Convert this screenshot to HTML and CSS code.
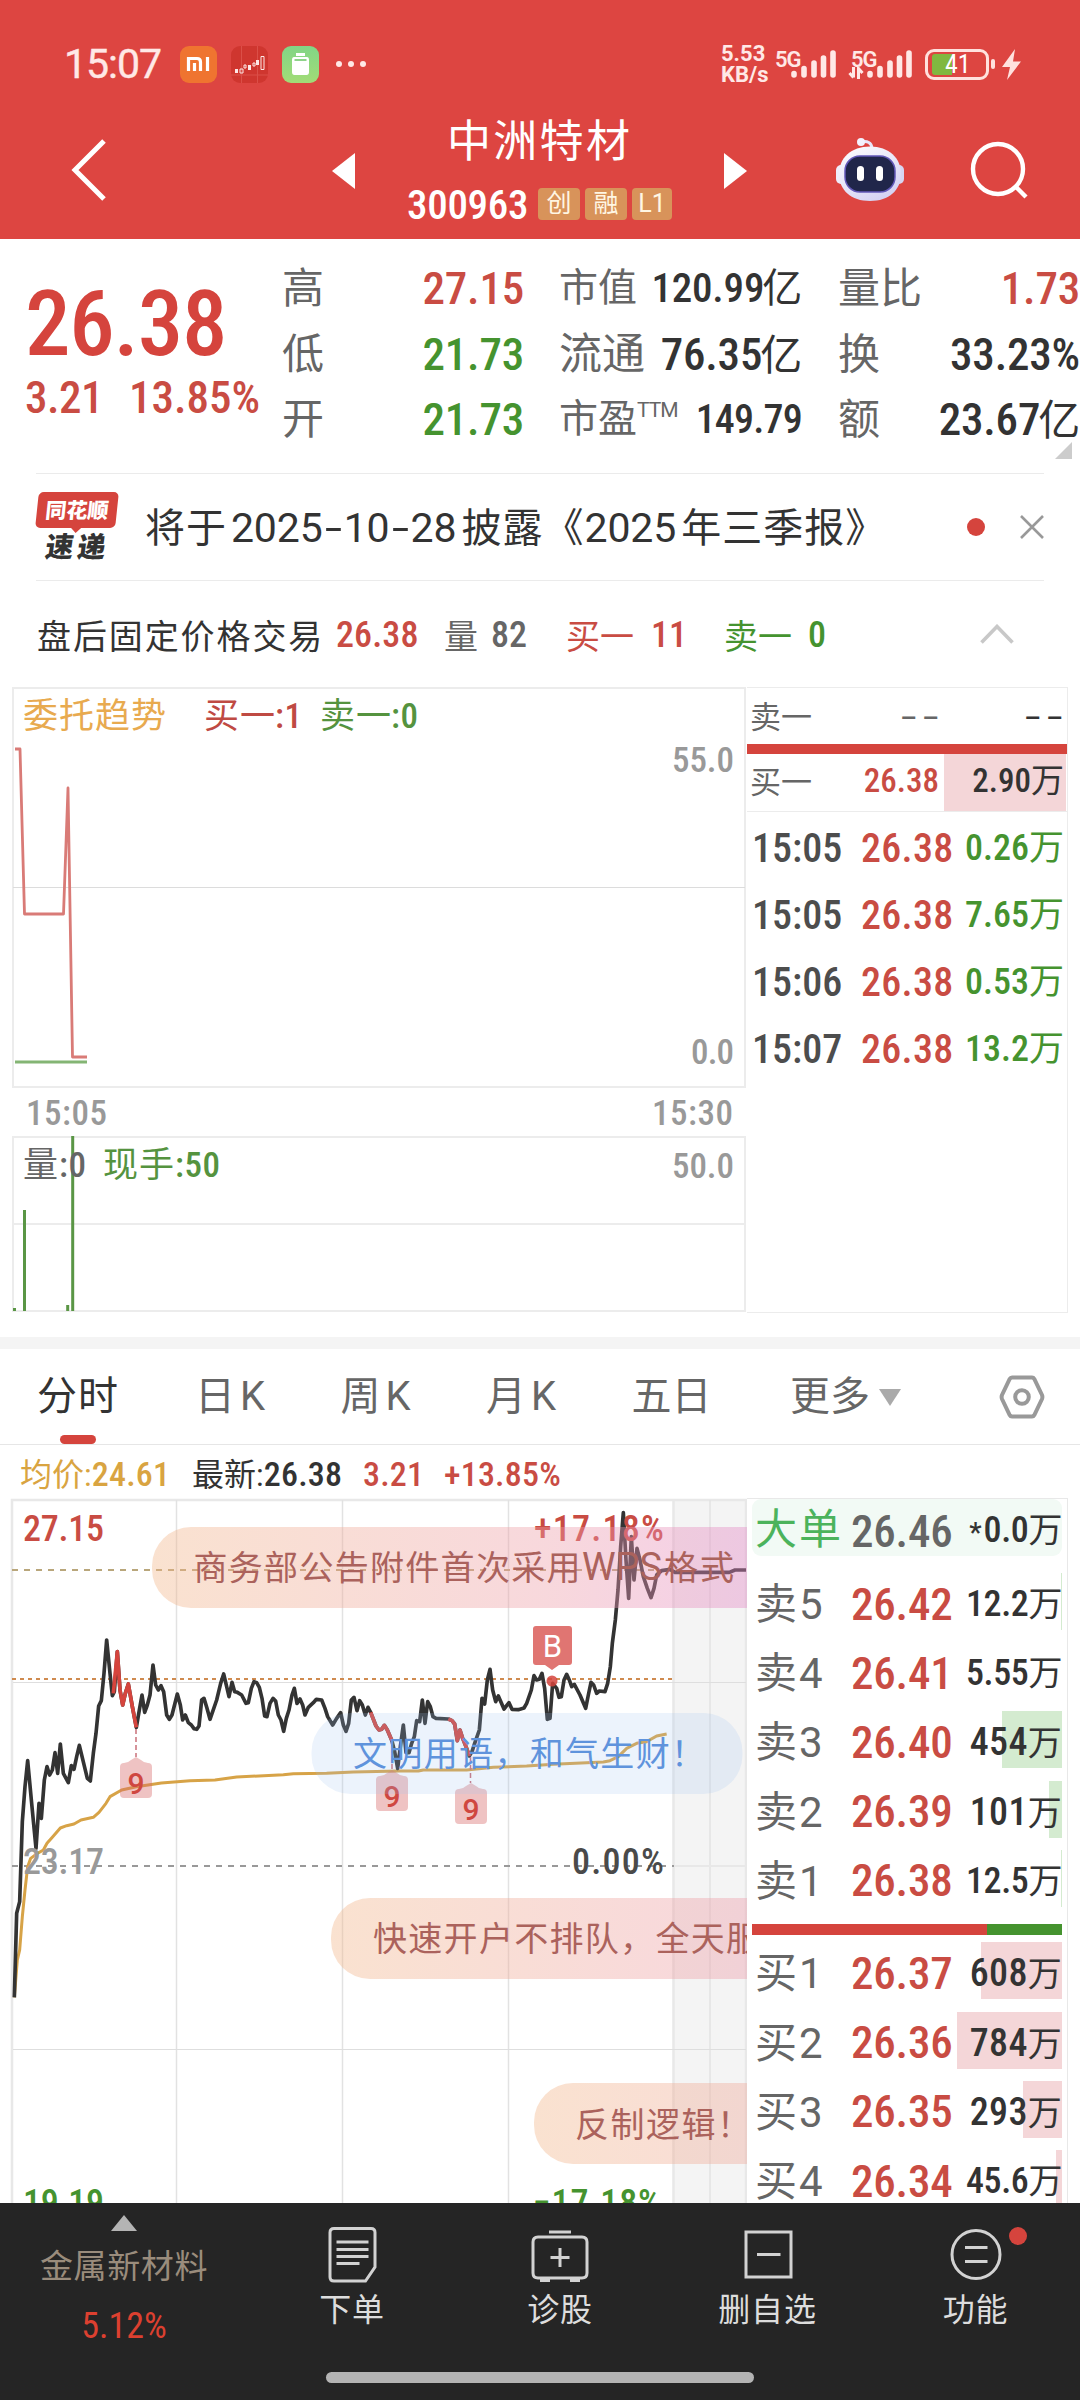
FILE: index.html
```
<!DOCTYPE html>
<html lang="zh-CN">
<head>
<meta charset="utf-8">
<title>中洲特材 300963</title>
<link rel="stylesheet" href="styles.css">
</head>
<body>
<div class="page">
<header class="header">
  <div class="status">
    <span class="clock">15:07</span>
    <svg class="app-icon mi" viewBox="0 0 37 37"><rect width="37" height="37" rx="9" fill="#ef7430"/><path d="M8.500 25V12.500H17q3.500 0 3.500 3.500V25M14.500 17v8M27.500 11v14" fill="none" stroke="#fff" stroke-width="3.200"/></svg>
    <svg class="app-icon" viewBox="0 0 37 37"><rect width="37" height="37" rx="9" fill="#cf362f"/><path d="M10.500 0v37M26.500 0v37M0 29h37" stroke="#db4f48" stroke-width="1"/><g fill="#fde8e6"><path d="M4 23h3v4H4zM17 19h3v5h-3zM25 14h3v5h-3z"/></g><path d="M9 23h3v4H9zM13 19h2v3h-2zM22 17h2v3h-2zM30 10.500h3v13h-3z" fill="none" stroke="#fde8e6"/></svg>
    <svg class="app-icon" viewBox="0 0 37 37"><defs><linearGradient id="gb" x2="0" y2="1"><stop stop-color="#82d586"/><stop offset="1" stop-color="#a2dc76"/></linearGradient></defs><rect width="37" height="37" rx="9" fill="url(#gb)"/><path d="M14 7h9v3h-9zM12 11h13q2 0 2 3v12q0 3-2.500 3h-12Q10 29 10 26V14q0-3 2-3z" fill="#fff"/><path d="M12.500 14h12" stroke="#8fd38a" stroke-width="2"/></svg>
    <span class="dots"><i></i><i></i><i></i></span>
    <span class="speed">5.53<br>KB/s</span>
    <span class="net">5G</span>
    <svg class="bars" viewBox="0 0 46 30"><path d="M3 26v-1.500M13 26v-6.500M23 26V14M32.500 26V9M42 26V4" stroke="#ffe8e6" stroke-width="5.600" stroke-linecap="round" fill="none"/></svg>
    <span class="net second">5G</span>
    <svg class="updown" viewBox="0 0 16 12"><path d="M5.500 0v10.500M1.500 6l4 4.500M10.500 12V1.500l4 4.500" fill="none" stroke="#ffe8e6" stroke-width="3"/></svg>
    <svg class="bars after" viewBox="0 0 46 30"><path d="M3 26v-1.500M13 26v-6.500M23 26V14M32.500 26V9M42 26V4" stroke="#ffe8e6" stroke-width="5.600" stroke-linecap="round" fill="none"/></svg>
    <span class="battery"><i></i><b>41</b></span><span class="nub"></span>
    <svg class="bolt" viewBox="0 0 19 31"><path d="M13 0 0 18h8L5 31 19 12.500h-8z" fill="#ffe1de"/></svg>
  </div>
  <div class="nav">
    <svg class="back" viewBox="0 0 36 62"><path d="M33 2 4 31l29 29" fill="none" stroke="#fff" stroke-width="5"/></svg>
    <svg class="prev" viewBox="0 0 23 36"><path d="M0 18 23 0v36z" fill="#fff"/></svg>
    <div class="title">
      <h1>中洲特材</h1>
      <div class="code"><span class="num">300963</span><em>创</em><em>融</em><em class="l1">L1</em></div>
    </div>
    <svg class="next" viewBox="0 0 23 36"><path d="M23 18 0 0v36z" fill="#fff"/></svg>
    <svg class="robot" viewBox="0 0 68 64"><defs><linearGradient id="rb" x2=".6" y2="1"><stop stop-color="#fff"/><stop offset="1" stop-color="#d5d3f3"/></linearGradient></defs><path d="M25 5q10-2 11 6" fill="none" stroke="#e8e6fa" stroke-width="3"/><circle cx="25" cy="5" r="4" fill="#f3f1fd"/><rect y="28" width="12" height="19" rx="5" fill="#eeedfb"/><rect x="56" y="28" width="12" height="19" rx="5" fill="#d7d6f2"/><path d="M34 9.500C53 9.500 65 21 65 37S53 64 34 64 3 53 3 37 15 9.500 34 9.500z" fill="url(#rb)"/><rect x="9" y="19" width="50" height="36" rx="15" fill="#20264a" stroke="#6258b8" stroke-width="1.500"/><rect x="21" y="29" width="7" height="15" rx="3.500" fill="#fff"/><rect x="40" y="29" width="7" height="15" rx="3.500" fill="#fff"/></svg>
    <svg class="search" viewBox="0 0 60 60"><circle cx="28" cy="29" r="25" fill="none" stroke="#fff" stroke-width="4.400"/><path d="m45 46 11 11" stroke="#fff" stroke-width="4.400"/></svg>
  </div>
</header>

<section class="quote">
  <div class="last">
    <div class="big num">26.38</div>
    <div class="chg num"><span>3.21</span><span>13.85%</span></div>
  </div>
  <dl class="col c1">
    <dt>高</dt><dd class="red">27.15</dd>
    <dt>低</dt><dd class="green">21.73</dd>
    <dt>开</dt><dd class="green">21.73</dd>
  </dl>
  <dl class="col c2">
    <dt class="s">市值</dt><dd class="s">120.99<u>亿</u></dd>
    <dt>流通</dt><dd>76.35<u>亿</u></dd>
    <dt class="s">市盈<sup>TTM</sup></dt><dd class="s pe">149.79</dd>
  </dl>
  <dl class="col c3">
    <dt>量比</dt><dd class="red">1.73</dd>
    <dt>换</dt><dd>33.23%</dd>
    <dt>额</dt><dd>23.67<u>亿</u></dd>
  </dl>
  <i class="corner"></i>
</section>

<section class="news">
  <div class="logo"><b>同花顺</b><strong>速递</strong></div>
  <p>将于<span class="d">2025<q>-</q>10<q>-</q>28</span>披露《<span class="y">2025</span>年三季报》</p>
  <i class="dot"></i>
  <svg class="close" viewBox="0 0 24 24"><path d="m1 1 22 22M23 1 1 23" stroke="#999" stroke-width="2.600"/></svg>
</section>

<section class="after-hours">
  <span class="name">盘后固定价格交易</span><span class="num red">26.38</span>
  <span class="gray">量</span><span class="num gray">82</span>
  <span class="red">买一</span><span class="num red">11</span>
  <span class="green">卖一</span><span class="num green">0</span>
  <svg class="fold" viewBox="0 0 34 20"><path d="M1.500 18.500 17 2.500l15.500 16" fill="none" stroke="#c8c8c8" stroke-width="3.600"/></svg>
</section>

<section class="auction">
  <svg class="trend" viewBox="0 686 747 627" width="747" height="627">
    <g fill="none" stroke="#ececec" stroke-width="2"><path d="M13 688h732v399H13zM13 1137h732v174H13zM13 1224h732"/><path d="M13 887.500h732" stroke="#dcdcdc" stroke-width="1"/></g>
    <path d="M15 749h5l4.500 165h39L68 788l4.500 269H87" fill="none" stroke="#d97b77" stroke-width="2.800" stroke-linejoin="round"/>
    <path d="M15 1062h72" stroke="#84b574" stroke-width="2.800"/>
    <path d="M72.700 1136v175M24.500 1210v101M14.500 1308v3M67.700 1305v6" stroke="#5a9645" stroke-width="3"/>
    <g class="lbl">
      <text x="23" y="728" fill="#e8aa4f" textLength="144">委托趋势</text>
      <text x="204" y="728" fill="#bf4a43">买一<tspan x="275">:1</tspan></text>
      <text x="320" y="728" fill="#55933f">卖一<tspan x="391">:0</tspan></text>
      <text x="23" y="1177" fill="#666">量<tspan x="59">:0</tspan></text>
      <text x="103" y="1177" fill="#55933f" textLength="72">现手</text><text x="175" y="1177" fill="#55933f"><tspan>:50</tspan></text>
    </g>
    <g class="axis">
      <text x="734" y="772" text-anchor="end" textLength="62">55.0</text>
      <text x="734" y="1064" text-anchor="end" textLength="43">0.0</text>
      <text x="26" y="1125" textLength="81">15:05</text>
      <text x="733" y="1125" text-anchor="end" textLength="81">15:30</text>
      <text x="734" y="1178" text-anchor="end" textLength="62">50.0</text>
    </g>
  </svg>
  <div class="ticks">
    <div class="bid"><span>卖一</span><span class="dash">– –</span><span class="dash dark">– –</span></div>
    <div class="split"></div>
    <div class="bid buy"><span>买一</span><span class="num red">26.38</span><span class="num vol">2.90<u>万</u></span></div>
    <div class="tick"><span>15:05</span><span class="red">26.38</span><span class="green">0.26<u>万</u></span></div>
    <div class="tick"><span>15:05</span><span class="red">26.38</span><span class="green">7.65<u>万</u></span></div>
    <div class="tick"><span>15:06</span><span class="red">26.38</span><span class="green">0.53<u>万</u></span></div>
    <div class="tick"><span>15:07</span><span class="red">26.38</span><span class="green">13.2<u>万</u></span></div>
  </div>
</section>

<nav class="tabs">
  <span class="on">分时</span><span>日<b>K</b></span><span>周<b>K</b></span><span>月<b>K</b></span><span>五日</span><span class="more">更多<i></i></span>
  <svg viewBox="0 0 46 44"><path d="M13 2.500h20q1.500 0 2.300 1.400L43 20q.8 2 0 4l-7.700 16q-.8 1.500-2.300 1.500H13q-1.500 0-2.300-1.500L3 24q-.8-2 0-4l7.700-16q.8-1.500 2.300-1.500z" fill="none" stroke="#999" stroke-width="4"/><circle cx="23" cy="22" r="6.800" fill="none" stroke="#999" stroke-width="4"/></svg>
</nav>

<div class="summary">
  <span class="avg">均价:<b>24.61</b></span><span class="now">最新:<b>26.38</b></span><span class="red"><b>3.21</b></span><span class="red"><b>+13.85%</b></span>
</div>

<section class="market">
  <svg class="minute" viewBox="0 1498 747 706" width="747" height="706">
    <defs>
      <linearGradient id="g1" gradientUnits="userSpaceOnUse" x1="152" x2="772"><stop stop-color="#f2b689"/><stop offset=".65" stop-color="#ed9da9"/><stop offset="1" stop-color="#e283c9"/></linearGradient>
      <linearGradient id="g2" gradientUnits="userSpaceOnUse" x1="331" x2="951"><stop stop-color="#f2b689"/><stop offset=".65" stop-color="#ed9da9"/><stop offset="1" stop-color="#e283c9"/></linearGradient>
      <linearGradient id="g3" gradientUnits="userSpaceOnUse" x1="534" x2="1154"><stop stop-color="#f2b689"/><stop offset=".65" stop-color="#ed9da9"/><stop offset="1" stop-color="#e283c9"/></linearGradient>
    </defs>
    <path d="M673 1500h73v704h-73z" fill="#f4f4f4"/>
    <g fill="none" stroke="#e8e8e8" stroke-width="2"><path d="M12 2204V1500h734v704M673.500 1500v704" stroke-width="2.500"/><path d="M176.500 1500v704M342.500 1500v704M508.500 1500v704M710 1500v704" stroke-width="1.500" stroke="#e2e2e2"/><path d="M13 1682.500h733M13 2049.500h733" stroke="#dedede" stroke-width="1"/><path d="M674 1866h72"/></g>
    <path d="M12 1570h661" stroke="#b9a67b" stroke-width="2" stroke-dasharray="6 6"/>
    <path d="M12 1679h660" stroke="#cf8a4f" stroke-width="2" stroke-dasharray="4 4"/>
    <path d="M12 1866h662" stroke="#999" stroke-width="2" stroke-dasharray="6 6"/>
    <g fill="none" stroke-linejoin="round">
      <g stroke="#d7a347" stroke-width="9">
        <polyline transform="translate(0 1600) scale(.33333)" points="43,1192 52,1080 59,1050 67,950 75,870 83,800 92,775 108,763 130,750 141,730 157,712 181,684 200,677 222,672 243,660 280,652 297,637 318,610 330,590 365,570 409,560 484,549 570,542 645,540 710,531 850,524 880,521 980,520 1060,516 1198,513 1255,513 1270,510 1400,510 1480,502 1580,498 1660,493 1810,486 1830,482 1855,470 1880,445 1910,430 1940,425 1970,408 2000,402"/>
      </g>
      <g stroke="#333" stroke-width="11">
        <polyline transform="translate(0 1600) scale(.33333)" points="43,1192 50,940 59,905 67,665 75,560 83,482 95,610 108,745 117,610 124,655 133,540 141,500 149,525 157,510 165,458 173,520 181,432 190,520 205,548 214,497 222,508 230,470 238,436 262,535 271,543 280,460 288,400 296,318 304,302 312,220 320,120 330,220 337,287 343,275 352,155 360,270 368,315 376,280 385,252 397,320 409,382 418,330 426,285 434,337 442,315 450,285 459,195 467,255 475,270 483,257 491,275 500,345 508,358 516,345 532,282 541,315 548,360 556,345 565,368 574,375 582,386 590,388 597,378 605,300 612,295 621,325 630,358 650,300 662,250 671,222 680,260 687,290 696,247 704,275 712,277 725,285 738,310 745,308 754,265 762,245 770,248 778,262 786,295 794,348 801,350 810,310 819,295 827,303 835,345 843,360 851,394 859,355 867,330 876,285 883,265 891,310 900,297 908,315 915,345 925,322 940,308 949,298 965,300 975,325 983,350 998,375 1010,355 1022,338 1030,375 1038,394 1046,370 1054,300 1062,292 1071,332 1079,302 1087,315 1096,345 1104,322 1112,337 1128,378 1137,390 1145,388 1153,376 1162,390 1175,420"/>
        <polyline transform="translate(360 1480) scale(.33333)" points="95,780 104,815 113,865 121,800 130,735 138,818 147,818 155,790 163,770 170,722 179,725 187,660 195,730 203,665 211,680 219,710 228,715 265,717 276,722 284,732 292,782 300,750 308,775 320,805 328,828 336,815 344,790 358,750 366,655 374,672 382,600 390,568 398,630 407,665 415,648 432,687 447,668 456,688 475,689 492,684 500,670 514,630 522,587 530,600 538,598 546,580 554,625 562,718 570,715 578,610 590,625 597,652 604,650 612,600 620,583 628,600 635,620 643,613 660,645 677,685 685,645 693,607 701,615 710,640 718,633 735,635 743,610 751,560 757,490 766,420 774,330 782,200 790,98 798,240 806,355 814,170 822,300 831,205 840,240 850,290 862,325 873,353 882,325 890,285 905,272 930,268 945,277 1108,277 1125,270 1158,270"/>
      </g>
      <g stroke="#d5443d" stroke-width="11">
        <polyline transform="translate(0 1600) scale(.33333)" points="340,280 352,155 360,270 368,315 376,280 385,252 397,320 409,382"/>
        <polyline transform="translate(0 1600) scale(.33333)" points="1112,337 1128,378 1137,390 1145,388 1153,376 1162,390 1175,420"/>
        <polyline transform="translate(360 1480) scale(.33333)" points="265,717 276,722 284,732 292,782 300,750 308,775 320,805 328,828"/>
      </g>
    </g>
    <g stroke="#c9707a" stroke-width="1.500" stroke-dasharray="5 3"><path d="M136 1729v28M392 1740v30M470.500 1757v26"/></g>
    <g fill="#d86a6a" fill-opacity=".4"><path id="m" d="M124 1763q4 0 7-3l5-3 5 3q3 3 7 3t4 4v27q0 4-4 4h-24q-4 0-4-4v-27q0-4 4-4z"/><use href="#m" x="256" y="13"/><use href="#m" x="335" y="26"/></g>
    <g class="nine"><text x="136" y="1794">9</text><text x="392" y="1807">9</text><text x="471" y="1820">9</text></g>
    <path d="M536 1626h33q3 0 3 3v33q0 3-3 3h-10l-7 5-7-5h-9q-3 0-3-3v-33q0-3 3-3z" fill="#e07572"/>
    <text class="b" x="552.500" y="1657">B</text>
    <circle cx="552" cy="1681" r="5.500" fill="#d5443d" fill-opacity=".85"/>
    <g class="axis2">
      <text x="23" y="1541" fill="#c94c43" textLength="81">27.15</text>
      <text x="534" y="1541" fill="#c94c43" textLength="130">+17.18%</text>
      <text x="23" y="1874" fill="#999" textLength="81">23.17</text>
      <text x="572" y="1874" fill="#4a4a4a" textLength="92">0.00%</text>
      <text x="23" y="2215" fill="#45932f" textLength="81">19.19</text>
      <text x="533" y="2215" fill="#45932f" textLength="128">−17.18%</text>
    </g>
    <g fill-opacity=".4">
      <rect x="152" y="1527" width="700" height="81" rx="39" fill="url(#g1)"/>
      <rect x="331" y="1898" width="700" height="81" rx="39" fill="url(#g2)"/>
      <rect x="534" y="2083" width="500" height="81" rx="39" fill="url(#g3)"/>
      <rect x="311.500" y="1713" width="431" height="81" rx="39" fill="#9fc4f0" fill-opacity=".2"/>
    </g>
    <g class="chat" fill="#ab625c">
      <text x="193.500" y="1580" textLength="387">商务部公告附件首次采用</text><text x="582" y="1580" textLength="80" lengthAdjust="spacingAndGlyphs" class="wps">WPS</text><text x="664" y="1580" textLength="70">格式</text>
      <text x="353" y="1766" fill="#5f93dc" textLength="352">文明用语，和气生财！</text>
      <text x="373" y="1951" textLength="387">快速开户不排队，全天服</text>
      <text x="575" y="2137" textLength="176">反制逻辑！</text>
    </g>
  </svg>
  <div class="book">
    <div class="row bigorder"><span>大单</span><span>26.46</span><span><s>*</s>0.0<u>万</u></span></div>
    <div class="row"><span>卖5</span><span>26.42</span><span>12.2<u>万</u></span><i class="g" style="width:1px"></i></div>
    <div class="row"><span>卖4</span><span>26.41</span><span>5.55<u>万</u></span></div>
    <div class="row"><span>卖3</span><span>26.40</span><span class="w">454<u>万</u></span><i class="g" style="width:60px"></i></div>
    <div class="row"><span>卖2</span><span>26.39</span><span class="w">101<u>万</u></span><i class="g" style="width:13px"></i></div>
    <div class="row"><span>卖1</span><span>26.38</span><span>12.5<u>万</u></span><i class="g" style="width:1px"></i></div>
    <div class="ratio"></div>
    <div class="row"><span>买1</span><span>26.37</span><span class="w">608<u>万</u></span><i class="r" style="width:81px"></i></div>
    <div class="row"><span>买2</span><span>26.36</span><span class="w">784<u>万</u></span><i class="r" style="width:105px"></i></div>
    <div class="row"><span>买3</span><span>26.35</span><span class="w">293<u>万</u></span><i class="r" style="width:39px"></i></div>
    <div class="row"><span>买4</span><span>26.34</span><span>45.6<u>万</u></span><i class="r" style="width:6px"></i></div>
  </div>
</section>
</div>

<footer class="bottom">
  <div class="items">
    <div class="sector"><i></i><span>金属新材料</span><b>5.12%</b></div>
    <div class="item"><svg viewBox="0 0 60 60"><path d="M12 4.500h37q4 0 4 4V43L43.500 57H12q-4 0-4-4V8.500q0-4 4-4zM14.500 18h32M14.500 25.500h32M14.500 32.500h32M14.500 39.500h23"/></svg><span>下单</span></div>
    <div class="item"><svg viewBox="0 0 60 60"><path d="M8 13h44q5 0 5 5v31q0 5-5 5H8q-5 0-5-5V18q0-5 5-5zM19 8h22M10 56.500h10M40 56.500h10M30 24v19M20.500 33.500h19"/></svg><span>诊股</span></div>
    <div class="item"><svg viewBox="0 0 60 60"><path d="M8 8h45v45H8zM19 30.500h23.500"/></svg><span>删自选</span></div>
    <div class="item"><svg viewBox="0 0 60 60"><circle cx="30" cy="30.500" r="24"/><path d="M19 23.500h22.500M19 37.500h22.500"/></svg><span>功能</span><i class="badge"></i></div>
  </div>
  <div class="home"></div>
</footer>
</body>
</html>
```
FILE: styles.css
```
* { box-sizing: border-box; }
body { margin: 0; width: 1080px; height: 2400px; overflow: hidden; background: #fff; color: #333; font-family: Roboto, "Noto Sans CJK SC", sans-serif; }
i, em, u, s, q { font-style: normal; text-decoration: none; }
q::before, q::after { content: none; }
svg { display: block; flex: none; }
.num { font-family: "Roboto Condensed", Roboto, sans-serif; font-weight: 500; }
.red { color: #c94c43; }
.green { color: #45932f; }
.gray { color: #666; }
.page { height: 2203px; overflow: hidden; }

/* header */
.header { height: 239px; background: #dd4541; color: #fff; }
.status { display: flex; align-items: center; height: 98px; padding: 30px 0 0 64px; color: #ffe8e6; }
.clock { width: 116px; font-size: 41px; letter-spacing: -1px; -webkit-text-stroke: .4px; line-height: 68px; }
.app-icon { width: 37px; height: 37px; margin-right: 14px; }
.dots { display: flex; gap: 6px; width: 46px; padding-left: 3px; margin-right: 342px; }
.dots i { width: 6px; height: 6px; border-radius: 3px; background: #ffe8e6; }
.speed { width: 54px; font-size: 22px; font-weight: 700; line-height: 21px; white-space: nowrap; }
.net { width: 30px; height: 34px; margin-right: -14px; font-size: 22px; font-weight: 600; line-height: 25px; letter-spacing: -1px; }
.bars { width: 46px; height: 30px; }
.second { margin-left: 14px; margin-right: -33px; }
.updown { width: 16px; height: 12px; margin-top: 18px; }
.after { margin-left: 3px; margin-right: 12px; }
.battery { display: flex; align-items: center; position: relative; width: 64px; height: 31px; border: 3px solid #ffe1de; border-radius: 9px; }
.battery i { width: 20px; height: 21px; margin-left: 4px; background: #80b840; border-radius: 3px 0 0 3px; }
.battery b { position: absolute; left: 17px; top: 0; font: 400 26px/25px "Roboto Condensed"; color: #fff; }
.nub { width: 4px; height: 10px; margin: 0 7px 0 2px; border-radius: 2px; background: #ffe1de; }
.bolt { width: 19px; height: 31px; }
.nav { display: flex; align-items: center; height: 141px; }
.back { width: 36px; height: 62px; margin: 3px 0 0 71px; }
.prev { width: 23px; height: 36px; margin: 5px 52px 0 225px; }
.title { width: 266px; margin-top: 7px; }
h1 { margin: -2px 0 0 40px; font: 400 44px/66px "Noto Sans CJK SC"; letter-spacing: 2.300px; white-space: nowrap; }
.code { display: flex; align-items: center; height: 67px; }
.code .num { width: 131px; font-size: 41px; line-height: 50px; letter-spacing: -.3px; padding-top: 1px; }
.code em { width: 42px; height: 32px; margin-right: 5px; border-radius: 4px; background: #d8935a; color: #fff6e3; font-size: 25px; line-height: 31px; text-align: center; }
.code .l1 { width: 40px; margin: 0; }
.next { width: 23px; height: 36px; margin: 5px 89px 0 51px; }
.robot { width: 68px; height: 64px; margin-right: 66px; }
.search { width: 60px; height: 60px; margin-top: 2px; }

/* quote */
.quote { display: flex; position: relative; height: 234px; padding-top: 17px; }
.last { width: 282px; padding: 23px 0 0 25px; color: #d5443d; white-space: nowrap; }
.big { font-size: 91px; line-height: 91px; letter-spacing: -1.200px; }
.chg { display: flex; margin-top: 1px; font-size: 45px; line-height: 54px; color: #c94c43; }
.chg span:first-child { width: 104px; letter-spacing: -.5px; }
.col { display: grid; grid-template-columns: auto 1fr; grid-auto-rows: 65.500px; margin: 0; white-space: nowrap; font-size: 42px; line-height: 65px; }
.col dt { color: #666; font-weight: 400; }
.col dd { margin: 0; text-align: right; font-family: "Roboto Condensed"; font-weight: 500; font-size: 45px; letter-spacing: -.2px; }
.col u { font: 400 42px/1 "Noto Sans CJK SC"; margin-left: -2px; }
.c1 { width: 242px; }
.c2 { width: 243px; margin-left: 35px; grid-template-columns: 92px 151px; }
.c2 dt { font-size: 43px; }
.c2 dt.s { font-size: 39px; }
.c2 dd.s { font-size: 41px; }
.c2 dd.s u { font-size: 40px; }
.c2 dd.pe { font-size: 40px; letter-spacing: -.8px; }
.c3 { width: 242px; margin-left: 36px; }
sup { font-size: 21px; line-height: 0; vertical-align: 15px; letter-spacing: -1px; }
.corner { position: absolute; right: 8px; bottom: 14px; width: 0; height: 0; border: solid transparent; border-width: 0 0 17px 17px; border-bottom-color: #ccc; }

/* news */
.news { display: flex; align-items: center; height: 108px; margin: 0 36px; border: solid #ebebeb; border-width: 1.500px 0; }
.logo { width: 109px; height: 70px; }
.logo b { display: block; position: relative; width: 80px; height: 36px; margin-left: 1px; border-radius: 5px; background: #d5443d; color: #fff; font: 900 21px/34px "Noto Sans CJK SC"; text-align: center; transform: skewX(-6deg); }
.logo b::after { content: ""; position: absolute; left: 35px; top: 35px; border: solid transparent; border-width: 6px 6px 0; border-top-color: #d5443d; }
.logo strong { display: block; margin: -1px 0 0 10px; font: 900 28px/36px "Noto Sans CJK SC"; letter-spacing: 4px; transform: skewX(-8deg); width: 66px; }
.news p { margin: -5px 0 0; width: 823px; font-size: 40px; letter-spacing: 1px; white-space: nowrap; }
.news .d, .news .y { font-size: 41px; letter-spacing: -.1px; margin: 0 5px 0 4px; }
.news .y { margin-left: 0; }
.news q { display: inline-block; width: 21px; text-align: center; transform: scaleX(1.500); }
.dot { width: 18px; height: 18px; border-radius: 9px; background: #d5443d; }
.close { width: 24px; height: 24px; margin-left: 35px; }

/* after-hours */
.after-hours { display: grid; grid-template-columns: 299px 108px 47px 75px 85px 73px 84px 172px 34px; align-items: center; height: 105px; padding: 1px 0 0 37px; font-size: 34px; white-space: nowrap; }
.after-hours .name { letter-spacing: 1.900px; }
.after-hours .num { font-size: 36px; letter-spacing: .1px; padding-top: 1px; }
.fold { width: 34px; height: 20px; }

/* auction */
.auction { display: flex; height: 651px; }
.lbl { font: 400 35px "Noto Sans CJK SC"; letter-spacing: 1px; }
.lbl tspan { font: 500 35px "Roboto Condensed"; letter-spacing: .6px; }
.axis { font: 500 35px "Roboto Condensed"; fill: #999; }
.ticks { width: 321px; height: 626px; margin-top: 1px; border: solid #ececec; border-width: 1.500px 1.500px 1.500px 0; }
.bid { display: grid; grid-template-columns: 80px 109px 127px; align-items: center; height: 56px; padding-left: 3px; font-size: 31px; color: #666; }
.bid > :first-child { margin-top: -3px; }
.bid > :nth-child(n+2) { text-align: right; }
.dash { font-size: 26px; padding: 3px 0 0; word-spacing: -1px; font-weight: 500; }
.dark { color: #333; padding-right: 3px; }
.split { height: 10px; background: #d5443d; }
.buy { height: 58px; border-bottom: 1px solid #ececec; }
.buy > :first-child { margin-top: -7px; }
.buy .num { font-size: 33px; line-height: 53px; height: 57px; }
.buy .red { color: #c94c43; }
.buy .vol { justify-self: end; width: 122px; padding-right: 2px; background: #f4d6d8; color: #333; }
.buy u { font: 400 33px/1 "Noto Sans CJK SC"; }
.tick { display: grid; grid-template-columns: 109px 91px 112px; align-items: center; height: 67px; padding-left: 5px; font: 500 40px/73px "Roboto Condensed"; color: #4d4d4d; white-space: nowrap; }
.tick :nth-child(2) { letter-spacing: .3px; }
.tick .red { color: #c94c43; }
.tick .green { font-size: 36px; text-align: right; }
.tick u { font: 400 35px/1 "Noto Sans CJK SC"; }

/* tabs */
.tabs { display: flex; align-items: center; position: relative; height: 108px; padding: 10px 0 9px 37px; border-top: 12px solid #f4f4f4; border-bottom: 1.500px solid #e6e6e6; font-size: 40px; line-height: 60px; color: #666; }
.tabs span { width: 145.500px; padding-left: 12px; white-space: nowrap; }
.tabs b { font-weight: 400; margin-left: 5px; }
.tabs .on { width: 146px; padding-left: 0; color: #333; letter-spacing: 1px; }
.tabs .on::after { content: ""; position: absolute; left: 60px; bottom: 0; width: 36px; height: 9px; border-radius: 5px; background: #d5443d; }
.tabs .more { display: flex; align-items: center; width: 234px; padding-left: 25px; }
.tabs .more i { border: solid transparent; border-width: 17px 11px 0; border-top-color: #aaa; margin: 0 0 0 9px; }
.tabs svg { width: 46px; height: 44px; }

/* summary line */
.summary { display: grid; grid-template-columns: 172px 171px 81px 200px; height: 53px; padding: 0 0 0 20px; font-size: 32px; line-height: 60px; white-space: nowrap; }
.summary b { font: 500 34px/1 "Roboto Condensed"; letter-spacing: .2px; }
.avg { color: #d9a441; }

/* minute chart and order book */
.market { display: flex; height: 706px; }
.nine { font: 500 30px Roboto; fill: #cf4740; text-anchor: middle; }
.b { font: 400 31px Roboto; fill: #fff; text-anchor: middle; }
.axis2 { font: 500 36px "Roboto Condensed"; }
.chat { font: 400 34px "Noto Sans CJK SC"; }
.chat .wps { font-family: Roboto; font-size: 38px; }
.book { width: 321px; height: 800px; padding: 0 5px; border: 1.500px solid #e8e8e8; border-left: 0; }
.row { display: grid; position: relative; grid-template-columns: 95px 99px 112px; align-items: center; height: 57px; margin-bottom: 12.200px; padding-left: 4px; color: #666; font-size: 42px; line-height: 57px; white-space: nowrap; }
.row > span { position: relative; z-index: 1; }
.row > :nth-child(1) { letter-spacing: 2px; margin-left: -1px; }
.row > :nth-child(2) { font: 500 45px/58px "Roboto Condensed"; letter-spacing: -.2px; color: #c94c43; }
.row > :nth-child(3) { font: 500 36px/63px "Roboto Condensed"; letter-spacing: -.4px; color: #333; text-align: right; }
.row > .w:nth-child(3) { font-size: 38px; letter-spacing: .3px; }
.row u { font: 400 34px/1 "Noto Sans CJK SC"; }
.row i { position: absolute; right: 0; top: 0; height: 57px; }
.row .g { background: #d4ebd0; }
.row .r { background: #f4d6d8; }
.bigorder { margin-bottom: 17px; border-radius: 9px; background: #f2faf5; line-height: 52px; }
.bigorder > :nth-child(1) { position: relative; top: -2px; color: #4cb35c; }
.bigorder > :nth-child(2) { color: #666; }
.row s { font-size: 28px; letter-spacing: 2px; }
.ratio { height: 11px; margin: 17.700px 0 7px; background: linear-gradient(90deg, #d5443d 235px, #45932f 235px); }

/* bottom bar */
.bottom { height: 197px; background: #252525; color: #ddd; }
.items { display: grid; grid-template-columns: 248px 208px 208px 207px 209px; height: 169px; }
.sector { display: flex; flex-direction: column; align-items: center; padding-top: 12px; }
.sector i { border: solid transparent; border-width: 0 13.500px 16px; border-bottom-color: #b4b4b4; }
.sector span { margin-top: 11px; font-size: 33px; line-height: 50px; color: #9a8c7c; letter-spacing: .6px; }
.sector b { margin-top: 7px; font: 400 36px/54px "Roboto Condensed"; color: #dc4030; }
.item { display: flex; flex-direction: column; align-items: center; position: relative; padding-top: 21px; font-size: 32px; letter-spacing: .8px; }
.item svg { width: 60px; height: 60px; fill: none; stroke: #d2d2d2; stroke-width: 3; }
.item span { line-height: 48px; margin-top: 2px; }
.badge { position: absolute; left: 138px; top: 24px; width: 18px; height: 18px; border-radius: 9px; background: #d5443d; }
.home { width: 428px; height: 11px; margin: 0 auto; border-radius: 6px; background: #b4b4b4; }
```
